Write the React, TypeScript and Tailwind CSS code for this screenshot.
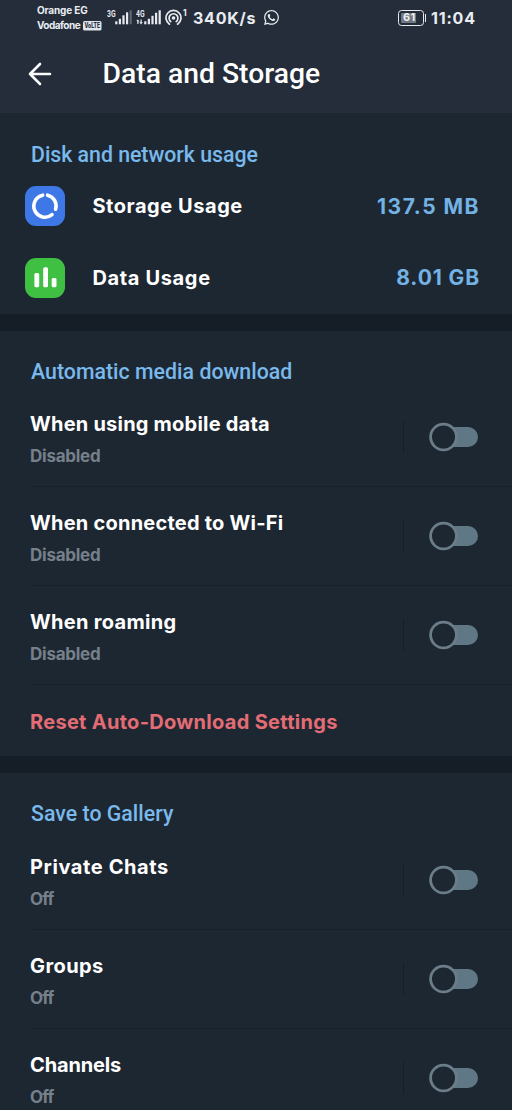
import type { ReactNode } from "react";
import { FaWhatsapp } from "react-icons/fa";

function Signal({ label, data, bars }: { label: string; data?: boolean; bars: number[] }) {
  return (
    <svg width="26" height="18" viewBox="0 0 26 18" className="block shrink-0" fill="#e6eaf0">
      <text x="0" y="8.5" fontSize="8.5" fontWeight="700" fontFamily="Roboto, sans-serif" textLength="8.5" lengthAdjust="spacingAndGlyphs">
        {label}
      </text>
      {data && <path d="M1.8 11.5 L3.6 13.5 H2.5 V16 H1.3 V13 H0.2z M4.5 11.5 H5.7 V14 H6.8 L5.1 16.5 L3.4 14.3 H4.5z" />}
      {bars.map((h, i) => (
        <rect key={i} x={8.2 + i * 3.6} y={16.3 - h} width="2.2" height={h} opacity={!data && i === 4 ? 0.3 : 1} />
      ))}
    </svg>
  );
}

function StatusBar() {
  return (
    <div className="flex h-[37px] items-start pl-[37px] pr-[36px] font-['Inter',sans-serif] font-bold text-[#e9edf2]">
      <div className="w-[70px] pt-[3px] text-[10px] leading-[15px]">
        <div className="tracking-[-0.15px]">Orange EG</div>
        <div className="flex items-center">
          <span className="w-[46px] tracking-[-0.5px]">Vodafone</span>
          <svg width="19" height="10" viewBox="0 0 19 10" className="block overflow-visible">
            <rect width="18.5" height="9.5" rx="1.5" fill="#dfe4ea" />
            <text x="1.5" y="7.4" fontSize="7" fontWeight="800" fill="#252d3a" textLength="15.5" lengthAdjust="spacingAndGlyphs">
              VoLTE
            </text>
          </svg>
        </div>
      </div>
      <div className="flex w-[58px] gap-[3px] pt-[8px]">
        <Signal label="3G" bars={[3, 5.5, 9, 12, 14]} />
        <Signal label="4G" data bars={[3, 5.5, 8.5, 11.5, 14]} />
      </div>
      <svg width="28" height="20" viewBox="0 0 28 20" className="mt-[7px] block shrink-0" fill="none" stroke="#e9edf2" strokeWidth="1.7" strokeLinecap="round">
        <circle cx="8.5" cy="11" r="1.8" fill="#e9edf2" stroke="none" />
        <path d="M5.8 14.6 A4.4 4.4 0 1 1 11.2 14.6" />
        <path d="M4.4 17.2 A7.5 7.5 0 1 1 12.6 17.2" />
        <text x="18" y="9" fontSize="8.5" fontWeight="700" fontFamily="Inter, sans-serif" fill="#e9edf2" stroke="none">
          1
        </text>
      </svg>
      <span className="w-[69.5px] pt-[8px] text-[16px] leading-5 tracking-[0.75px]">340K/s</span>
      <FaWhatsapp className="mt-[9px] size-[17px]" />
      <div className="ml-auto flex pt-[7.5px]">
        <div className="mt-[2px] flex h-[16px] w-[26px] items-center justify-center rounded-[3.5px] border-[1.5px] border-[#e6eaf0]">
          <div className="flex h-[10px] w-[20px] items-center rounded-[1px] bg-linear-to-r from-[#6f7780] from-75% to-transparent to-75% pl-[2.5px] text-[11px] leading-none tracking-[0.3px]">
            61
          </div>
        </div>
        <div className="mr-[5px] ml-px mt-[6px] h-[8px] w-[1.5px] bg-[#e6eaf0]" />
        <span className="w-[45px] text-[16px] leading-5 tracking-[0.8px]">11:04</span>
      </div>
    </div>
  );
}

function Header() {
  return (
    <header className="h-[113px] bg-[#252d3a]">
      <StatusBar />
      <div className="flex h-[74px] items-center pl-[28px]">
        <svg width="24" height="24" viewBox="0 0 24 24" fill="none" stroke="#f7f9fb" strokeWidth="2.6" strokeLinecap="round" strokeLinejoin="round">
          <path d="M22 12 H2 M12 2 L2 12 L12 22" />
        </svg>
        <h1 className="ml-[50.5px] font-['Roboto',sans-serif] text-[28.3px] leading-9 font-medium text-white">Data and Storage</h1>
      </div>
    </header>
  );
}

function Heading({ text, className }: { text: string; className: string }) {
  return (
    <h2 className={`flex items-center pl-[31px] font-['Roboto',sans-serif] text-[21.3px] font-medium text-[#79b9ec] ${className}`}>{text}</h2>
  );
}

function Toggle() {
  return (
    <svg width="50" height="30" viewBox="0 0 50 30" className="block">
      <rect x="8" y="5" width="41" height="20" rx="10" fill="#607885" />
      <circle cx="14.5" cy="15" r="12.9" fill="#1d2732" stroke="#6a7d89" strokeWidth="2.8" />
    </svg>
  );
}

function ToggleRow({ title, sub, titleClass, subClass, line }: { title: string; sub: string; titleClass: string; subClass: string; line?: boolean }) {
  return (
    <div className="flex h-[99px] flex-col">
      <div className="flex flex-1 items-center pl-[30px]">
        <div className="flex-1 pt-[3px] font-['Inter',sans-serif] font-bold">
          <div className={`text-[20px] leading-[34px] text-white ${titleClass}`}>{title}</div>
          <div className={`text-[17px] leading-[30px] text-[#76808b] ${subClass}`}>{sub}</div>
        </div>
        <div className="flex items-center">
          <div className="mr-[25px] h-[32px] w-[1.5px] bg-[#151d27]" />
          <div className="mr-[33px]">
            <Toggle />
          </div>
        </div>
      </div>
      <div className={`ml-[30px] h-px ${line ? "bg-[#18202a]" : ""}`} />
    </div>
  );
}

function UsageRow({ icon, title, value, titleClass, valueClass }: { icon: ReactNode; title: string; value: string; titleClass: string; valueClass: string }) {
  return (
    <div className="flex h-[72px] items-center pr-[32px] pl-[25.4px] font-['Inter',sans-serif] font-bold">
      {icon}
      <span className={`ml-[27px] text-[20px] leading-6 text-white ${titleClass}`}>{title}</span>
      <span className={`ml-auto text-[21px] leading-6 text-[#73b2e3] ${valueClass}`}>{value}</span>
    </div>
  );
}

const storageIcon = (
  <svg width="40" height="40" viewBox="0 0 40 40" className="block">
    <rect width="40" height="40" rx="11" fill="#3e78e6" />
    <g fill="none" stroke="#fff" strokeWidth="3.6" strokeLinecap="round">
      <path d="M17.6 9.2 A11.1 11.1 0 1 0 27 28.6" />
      <path d="M22.6 9.2 A11.1 11.1 0 0 1 30.6 23.2" />
    </g>
  </svg>
);

const dataIcon = (
  <svg width="40" height="40" viewBox="0 0 40 40" className="block">
    <rect width="40" height="40" rx="11" fill="#3fc043" />
    <g fill="#fff">
      <rect x="9.4" y="15" width="4.8" height="14.3" rx="1.5" />
      <rect x="18.2" y="9.3" width="4.8" height="20" rx="1.5" />
      <rect x="26.7" y="20" width="4.8" height="9.3" rx="1.5" />
    </g>
  </svg>
);

const gap = <div className="h-[17px] bg-[#151e27]" />;

export default function App() {
  return (
    <div className="h-[1110px] w-[512px] overflow-hidden bg-[#1d2732]">
      <Header />
      <section>
        <Heading text="Disk and network usage" className="h-[57px] pt-[26px] tracking-[-0.02px]" />
        <UsageRow icon={storageIcon} title="Storage Usage" value="137.5 MB" titleClass="tracking-[0.55px]" valueClass="pt-px tracking-[1.5px]" />
        <UsageRow icon={dataIcon} title="Data Usage" value="8.01 GB" titleClass="tracking-[0.65px]" valueClass="tracking-[0.9px]" />
      </section>
      {gap}
      <section>
        <Heading text="Automatic media download" className="h-[57px] pt-[24px] tracking-[0.03px]" />
        <ToggleRow title="When using mobile data" sub="Disabled" titleClass="tracking-[0.22px]" subClass="tracking-[-0.25px]" line />
        <ToggleRow title="When connected to Wi-Fi" sub="Disabled" titleClass="tracking-[0.23px]" subClass="tracking-[-0.25px]" line />
        <ToggleRow title="When roaming" sub="Disabled" titleClass="tracking-[0.3px]" subClass="tracking-[-0.25px]" line />
        <div className="flex h-[71px] items-center pt-[2px] pl-[30px] font-['Inter',sans-serif] text-[20px] leading-6 font-bold tracking-[0.29px] text-[#e46c74]">
          Reset Auto-Download Settings
        </div>
      </section>
      {gap}
      <section>
        <Heading text="Save to Gallery" className="h-[58px] pt-[23px] tracking-[0.03px]" />
        <ToggleRow title="Private Chats" sub="Off" titleClass="tracking-[0.6px]" subClass="tracking-[-0.8px]" line />
        <ToggleRow title="Groups" sub="Off" titleClass="tracking-[0.4px]" subClass="tracking-[-0.8px]" line />
        <ToggleRow title="Channels" sub="Off" titleClass="tracking-[-0.15px]" subClass="tracking-[-0.8px]" />
      </section>
    </div>
  );
}
